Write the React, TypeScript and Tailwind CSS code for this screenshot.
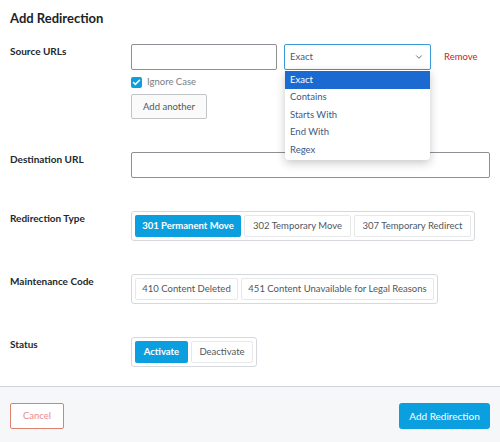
import { ChevronDown, Check } from "lucide-react"

const font = { fontFamily: "Lato, 'Noto Sans', sans-serif" }

function Label({ children }: { children: string }) {
  return (
    <div className="w-[121px] shrink-0 pt-[1px] text-[10px] leading-[12px] font-bold text-[#23282d]">
      {children}
    </div>
  )
}

type Item = { label: string; w: string }

function Segment({ items, active }: { items: Item[]; active?: number }) {
  return (
    <div className="flex gap-[3px] rounded-[3px] border border-[#d5d8dc] p-[3px]">
      {items.map((item, i) =>
        i === active ? (
          <div
            key={item.label}
            className={`${item.w} flex h-[22px] items-center justify-center rounded-[2px] bg-[#0c9fe0] text-[9.5px] font-bold whitespace-nowrap text-white`}
          >
            {item.label}
          </div>
        ) : (
          <div
            key={item.label}
            className={`${item.w} flex h-[22px] items-center justify-center rounded-[2px] border border-[#e6e8ea] text-[9.5px] whitespace-nowrap text-[#50575e]`}
          >
            {item.label}
          </div>
        )
      )}
    </div>
  )
}

export default function App() {
  const options = ["Exact", "Contains", "Starts With", "End With", "Regex"]

  return (
    <div className="flex h-[442px] w-[500px] flex-col bg-white" style={font}>
      <div className="flex flex-1 flex-col px-[10px]">
        <h1 className="pt-[10px] text-[13px] leading-[17px] font-bold text-[#1d2327]">
          Add Redirection
        </h1>

        <div className="mt-[17px] flex flex-col gap-[33px]">
          {/* Source URLs */}
          <div className="flex">
            <Label>Source URLs</Label>
            <div className="flex flex-col">
              <div className="flex items-center">
                <div className="h-[26px] w-[146px] rounded-[2px] border border-[#8c8f94]" />
                <div className="relative ml-[7px]">
                  <div className="flex h-[26px] w-[147px] items-center justify-between rounded-[2px] border border-[#3a9ad9] pr-[6px] pl-[5px] text-[9.5px] text-[#3c5a84]">
                    <span>Exact</span>
                    <ChevronDown className="h-[10px] w-[10px] text-[#50575e]" strokeWidth={2} />
                  </div>
                  <div className="absolute top-[26px] left-[1px] z-10 w-[145px] rounded-b-[4px] bg-white pt-[1px] pb-[1px] shadow-[0_3px_10px_rgba(0,0,0,0.22)]">
                    {options.map((o, i) => (
                      <div
                        key={o}
                        className={
                          i === 0
                            ? "flex h-[17.5px] items-center bg-[#1b6ad1] px-[5px] text-[9.5px] text-white"
                            : "flex h-[17.5px] items-center px-[5px] text-[9.5px] text-[#3c5a84]"
                        }
                      >
                        {o}
                      </div>
                    ))}
                  </div>
                </div>
                <span className="ml-[13px] text-[9.5px] text-[#c0262d]">Remove</span>
              </div>
              <div className="mt-[5px] flex items-center gap-[5px]">
                <div className="flex h-[11px] w-[11px] items-center justify-center rounded-[2px] bg-[#0c9fe0]">
                  <Check className="h-[9px] w-[9px] text-white" strokeWidth={4} />
                </div>
                <span className="text-[9.5px] text-[#787c82]">Ignore Case</span>
              </div>
              <div className="mt-[5px] flex h-[25px] w-[76px] items-center justify-center rounded-[2px] border border-[#c3c4c7] bg-[#fafafa] text-[9.5px] text-[#50575e]">
                Add another
              </div>
            </div>
          </div>

          {/* Destination URL */}
          <div className="flex">
            <Label>Destination URL</Label>
            <div className="h-[26px] flex-1 rounded-[2px] border border-[#8c8f94]" />
          </div>

          {/* Redirection Type */}
          <div className="flex">
            <Label>Redirection Type</Label>
            <Segment
              items={[
                { label: "301 Permanent Move", w: "w-[106px]" },
                { label: "302 Temporary Move", w: "w-[107px]" },
                { label: "307 Temporary Redirect", w: "w-[117px]" },
              ]}
              active={0}
            />
          </div>

          {/* Maintenance Code */}
          <div className="flex">
            <Label>Maintenance Code</Label>
            <Segment
              items={[
                { label: "410 Content Deleted", w: "w-[103px]" },
                { label: "451 Content Unavailable for Legal Reasons", w: "w-[193px]" },
              ]}
            />
          </div>

          {/* Status */}
          <div className="flex">
            <Label>Status</Label>
            <Segment
              items={[
                { label: "Activate", w: "w-[53px]" },
                { label: "Deactivate", w: "w-[62px]" },
              ]}
              active={0}
            />
          </div>
        </div>
      </div>

      <div className="flex h-[56px] items-center justify-between border-t border-[#d0d4d8] bg-[#f6f7f8] px-[10px] pt-[3px]">
        <div className="flex h-[26px] w-[54px] items-center justify-center rounded-[2px] border border-[#e0806e] bg-white text-[9.5px] text-[#ec8a8a]">
          Cancel
        </div>
        <div className="flex h-[26px] w-[91px] items-center justify-center rounded-[3px] bg-[#0c9fe0] text-[10px] text-white">
          Add Redirection
        </div>
      </div>
    </div>
  )
}
